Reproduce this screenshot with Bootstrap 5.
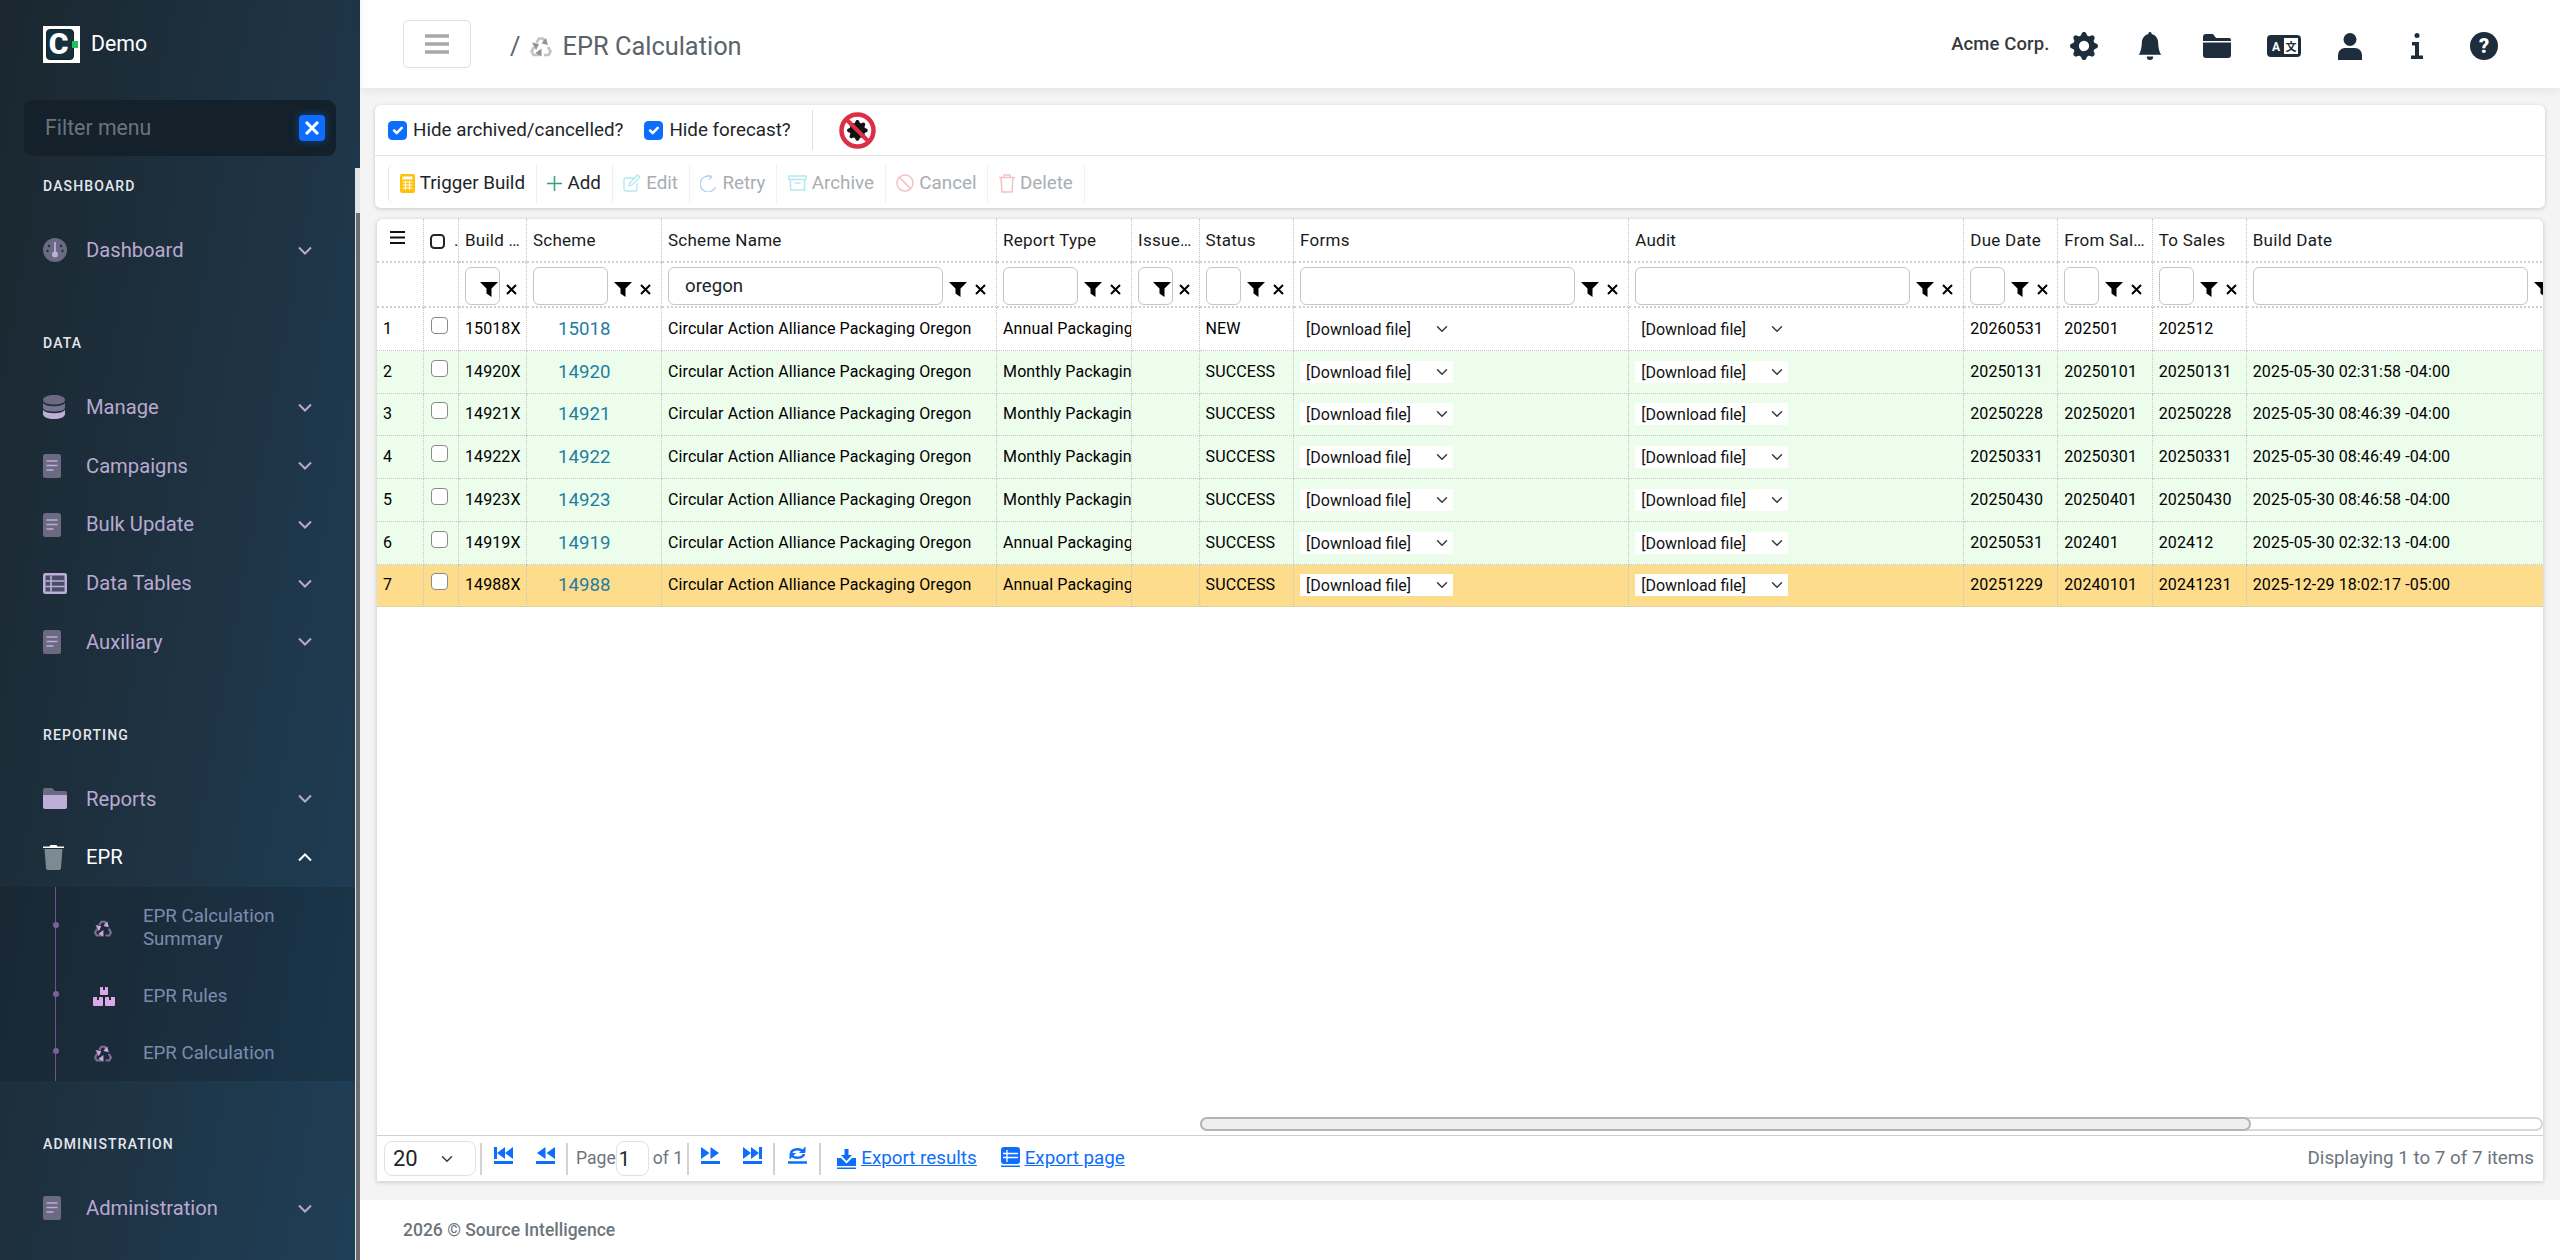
<!DOCTYPE html>
<html lang="en">
<head>
    <meta charset="UTF-8">
    <meta name="viewport" content="width=device-width, initial-scale=1.0">
    <title>EPR Calculation</title>
    <link href="https://cdn.jsdelivr.net/npm/bootstrap@5.3.2/dist/css/bootstrap.min.css" rel="stylesheet">
    <style>
        html, body { height: 100%; }
        body { font-family: Roboto, "Liberation Sans", sans-serif; font-size: 18.67px; background: #fff; overflow: hidden; }
        svg { flex: none; display: block; }
        .main-col { min-width: 0; }
        .recycle-pink { color: #cfa3dd; }
        .crumb-ico { color: #8d949a; }

        /* sidebar */
        .side-panel { width: 360px; height: 1260px; flex: none; position: relative; overflow: hidden; background: linear-gradient(100deg, #1a272f 0%, #1e3140 45%, #1f3f58 100%); }
        .side-brand { height: 88px; padding-left: 43px; color: #fff; font-size: 21.3px; }
        .brand-logo { width: 37px; height: 37px; background: #fff; padding: 3px 6px 3px 3px; margin-right: 11px; flex: none; }
        .brand-logo span { width: 100%; height: 100%; background: #12303f; border: 1px solid #1c1c1c; border-radius: 4px; color: #fff; font-weight: 900; font-size: 30px; line-height: 1; position: relative; padding-right: 3px; }
        .brand-logo span::after { content: ""; position: absolute; right: -5px; top: 11px; width: 6px; height: 7px; background: #22c05c; }
        .side-filter { margin: 12px 24px 0; height: 56px; padding: 0 11px 0 21px; background: #14202a; border-radius: 9px; }
        .side-filter input { background: transparent; border: 0; outline: 0; color: #fff; font-size: 21.3px; width: 100%; padding: 0; }
        .side-filter input::placeholder { color: #69747c; }
        .filter-clear { width: 26px; height: 26px; background: #0d6efd; border-radius: 4px; box-shadow: 0 0 8px rgba(13, 110, 253, .45); border: 0; padding: 0; }
        .side-menu { padding-top: 19px; }
        .side-head { height: 22px; line-height: 22px; padding-left: 43px; color: #e6e8ee; font-size: 14px; font-weight: 500; letter-spacing: 1.15px; margin-bottom: 24px; }
        .side-group { margin-bottom: 52.3px; }
        .side-item { height: 58.67px; padding: 0 48px 0 43px; color: #b9a9d1; text-decoration: none; font-size: 20.2px; }
        .side-item .item-ico { width: 43px; flex: none; }
        .side-item.is-open { color: #fff; }
        .side-sub { background: rgba(10, 22, 30, .2); position: relative; height: 194px; padding-top: 1px; margin-bottom: 2.5px; }
        .side-sub::before { content: ""; position: absolute; left: 55px; top: 0; bottom: 0; width: 1px; background: #6f5590; }
        .sub-item { padding: 17px 30px 17px 93px; line-height: 23px; color: #7c8cad; position: relative; text-decoration: none; }
        .sub-item::before { content: ""; position: absolute; left: 52.5px; top: calc(50% - 5.5px); width: 6px; height: 6px; border-radius: 50%; background: #7e5f9e; }
        .sub-item .item-ico { width: 50px; flex: none; }
        .side-bar-track { position: absolute; right: 0; top: 168px; bottom: 0; width: 5px; background: #e4e4e4; }
        .side-bar-thumb { margin-top: 45px; height: 1047px; margin-left: 1px; background: #6d6d6d; }

        /* header */
        .top-head { height: 88px; flex: none; background: #fff; padding: 0 0 0 43px; position: relative; z-index: 2; box-shadow: 0 3px 8px rgba(60, 60, 80, .07), inset 10px 0 10px -10px rgba(0, 0, 0, .08); }
        .menu-toggle { width: 68px; height: 48px; padding: 0; border: 1px solid #dedede; border-radius: 5px; background: #fff; }
        .crumb { margin: 4px 0 0 39px; color: #5b636a; font-size: 25.4px; }
        .top-icons { padding-right: 43px; margin-top: 4px; color: #1e2d3b; }
        .company { font-size: 18.5px; font-weight: 500; color: #343a40; width: 99px; margin-top: -2px; letter-spacing: .1px; }
        .top-ico { width: 66.7px; }

        /* content */
        .page-body { background: #f4f4f4; padding: 17px 15px 19px 15px; min-height: 0; }
        .tool-card { height: 103px; background: #fff; border-radius: 6px; box-shadow: 0 1px 4px rgba(0, 0, 0, .18); flex: none; }
        .tool-top { height: 51px; border-bottom: 1px solid #e3e3e3; padding-left: 13px; font-size: 18.8px; color: #212529; }
        .tool-top .form-check-input { width: 19px; height: 19px; margin: 0 6px 0 0; flex: none; border-radius: 4px; }
        .tool-label { margin-right: 21px; }
        .tool-sep { width: 1px; height: 40px; background: #dfdfdf; margin: 0 26px 0 21px; }
        .tool-bottom { height: 52px; padding: 7.5px 0 0 13px; }
        .tool-btn { height: 39px; padding: 0 10.7px; border: 0; border-right: 1px solid #efefef; border-radius: 0; font-size: 18.8px; gap: 5px; color: #212529; background: none; }
        .tool-btn:first-child { border-left: 1px solid #e6e6e6; border-radius: 6px 0 0 6px; }
        .tool-btn:disabled { color: #9aa0a6; opacity: .85; border-right-color: #efefef; }
        .grid-card { margin: 11px 2px 0; background: #fff; border-radius: 6px 6px 0 0; box-shadow: 0 1px 5px rgba(0, 0, 0, .2); overflow: hidden; min-height: 0; }
        .grid-wrap { overflow: hidden; min-height: 0; }
        .grid-table { width: 2205px; table-layout: fixed; border-collapse: separate; border-spacing: 0; margin: 0; color: #000; font-size: 16px; --bs-table-bg: transparent; }
        .grid-table > :not(caption) > * > * { padding: 0 0 0 6px; border: 0; border-right: 1px dotted #c4c4c4; border-bottom: 1px dotted #c4c4c4; white-space: nowrap; overflow: hidden; vertical-align: middle; }
        .grid-table thead th { font-weight: 400; height: 44px; padding-top: 2px; font-size: 17px; color: #1a1a1a; letter-spacing: .25px; border-bottom: 2px dotted #cfcfcf; text-overflow: ellipsis; padding-right: 3px; }
        .grid-table thead tr.filter-row td { height: 45px; border-bottom: 2px dotted #cfcfcf; }
        .grid-table tbody td { height: 42.75px; letter-spacing: .1px; }
        .row-done { --bs-table-bg: #ecfdec; }
        .row-pick { --bs-table-bg: #fddc8c; }
        .filter-box { padding-right: 10px; }
        .filter-box .form-control { height: 38px; border: 1.5px solid #c6c6c6; border-radius: 6px; padding: 0 16px; font-size: 18.67px; flex: 1 1 0; min-width: 35px; margin-top: 3px; color: #212529; }
        .filter-box .funnel { margin: 10px 8px 0 6px; }
        .filter-box .cross { margin-top: 10px; }
        .filter-box.is-tight .form-control { flex: 0 0 35px; }
        .filter-box.is-tight .funnel { margin-left: -20px; position: relative; }
        .pick-file { width: 153px; height: 22px; padding: 0 0 0 6px; border: 0; border-radius: 0; font-size: 16px; color: #111; background-position: right 3px center; background-color: #fff; }
        .grid-check { width: 17px; height: 17px; margin: 0 0 0 1px; border-color: #8a8a8a; }
        .head-check { width: 15px; height: 15px; margin: 1px 0 0; border: 2px solid #212529; border-radius: 3px; }
        .head-bars { margin: -7px 0 0 7px; }
        .head-dot { margin-left: 9px; }
        .scheme-link { color: #1f7ea3; font-size: 18.67px; text-decoration: none; margin-left: 25px; letter-spacing: 0; }
        .fake-scroll { height: 14px; margin: 0 0 4px 823px; border: 2px solid #d8d8d8; border-radius: 7px; flex: none; }
        .fake-scroll div { height: 100%; width: 78.2%; margin-top: 0; background: #efefef; outline: 2px solid #b4b4b4; outline-offset: 0; border-radius: 7px; }
        .pager { height: 46px; flex: none; border-top: 1px solid #cfcfcf; padding: 0 9px 0 7px; font-size: 17.6px; color: #6c757d; }
        .pager .form-select { width: 92px; height: 35px; padding: 0 0 0 8px; font-size: 22px; border-radius: 8px; color: #212529; background-position: right 20px center; }
        .pg-sep { width: 2px; height: 32px; background: #d2d2d2; }
        .pg-btn { width: 42px; color: #0d6efd; margin-top: -7px; }
        .pg-btn.is-wide { width: 44px; }
        .pg-page { width: 33px; height: 35px; padding: 0 0 0 2px; font-size: 20px; border-radius: 8px; }
        .pg-export { color: #0d6efd; font-size: 18.8px; gap: 5px; align-items: flex-end; margin-top: -1px; }
        .pg-export span { text-decoration: underline; }
        .pg-export svg { margin-bottom: 3px; }
        .pg-export.is-raised svg { margin-bottom: 5px; }
        .pg-note { font-size: 18.8px; color: #6c757d; }

        .bottom-line { height: 60px; flex: none; padding: 1px 0 0 43px; font-size: 17.5px; font-weight: 500; color: #6c757d; background: #fff; }
    </style>
</head>
<body>
    <!-- shared icons -->
    <svg width="0" height="0" class="position-absolute">
        <symbol id="ico-doc" viewBox="0 0 18 24">
            <rect width="18" height="24" rx="2.5" fill="#6b6a82"/>
            <path d="M3.5 7h11M3.5 11.5h11M3.5 16h7" stroke="#bcaed6" stroke-width="1.6"/>
        </symbol>
        <symbol id="ico-chev" viewBox="0 0 14 9">
            <path d="M1 1.5l6 6 6-6" fill="none" stroke="currentColor" stroke-width="2"/>
        </symbol>
        <symbol id="ico-recycle" viewBox="0 0 24 24">
            <g fill="none" stroke-width="2.6">
                <path d="M7.5 8.5 10 4.5h4l2.2 3.5" stroke="currentColor" stroke-opacity=".55"/>
                <path d="M5 13l-2.5 4.500 2 3.500h6" stroke="currentColor" stroke-opacity=".55"/>
                <path d="M15 21h4.500l2-3.500-2.500-4.500" stroke="currentColor" stroke-opacity=".55"/>
            </g>
            <path d="M16.500 4.500l2 7-6.500-1.500zM2.500 9l7 1.500-3 6zM12 15v8l-6-3.500z" fill="currentColor" transform="translate(.5 -.5)"/>
        </symbol>
        <symbol id="ico-funnel" viewBox="0 0 18 15">
            <path d="M0 0h18l-6.500 6.500V15l-5-3.500V6.500z" fill="#000"/>
        </symbol>
        <symbol id="ico-cross" viewBox="0 0 11 11">
            <path d="M1 1l9 9m0-9l-9 9" stroke="#000" stroke-width="2"/>
        </symbol>
    </svg>

    <div class="d-flex vh-100">
        <aside class="side-panel">
            <div class="side-brand d-flex align-items-center">
                <div class="brand-logo d-flex"><span class="d-flex align-items-center justify-content-center">C</span></div>
                Demo
            </div>
            <div class="side-filter d-flex align-items-center">
                <input type="text" placeholder="Filter menu">
                <button class="filter-clear d-flex align-items-center justify-content-center flex-shrink-0" type="button">
                    <svg width="14" height="14" viewBox="0 0 14 14"><path d="M1 1l12 12m0-12L1 13" stroke="#fff" stroke-width="3"/></svg>
                </button>
            </div>
            <nav class="side-menu">
                <div class="side-group">
                    <div class="side-head">DASHBOARD</div>
                    <a class="side-item d-flex align-items-center" href="#">
                        <span class="item-ico"><svg width="24" height="24" viewBox="0 0 24 24"><circle cx="12" cy="12" r="12" fill="#6b6a82"/><circle cx="12" cy="16.500" r="3" fill="#bcaed6"/><path d="M12 4v12" stroke="#bcaed6" stroke-width="1.800"/><circle cx="6" cy="8" r="1.200" fill="#1e3140"/><circle cx="18" cy="8" r="1.200" fill="#1e3140"/><circle cx="4.500" cy="13" r="1.200" fill="#1e3140"/><circle cx="19.500" cy="13" r="1.200" fill="#1e3140"/></svg></span>
                        <span class="flex-fill">Dashboard</span>
                        <svg width="14" height="9"><use href="#ico-chev"/></svg>
                    </a>
                </div>
                <div class="side-group">
                    <div class="side-head">DATA</div>
                    <a class="side-item d-flex align-items-center" href="#">
                        <span class="item-ico"><svg width="22" height="24" viewBox="0 0 22 24"><path d="M0 5c0-3 5-5 11-5s11 2 11 5-5 4.500-11 4.500S0 8 0 5z" fill="#6b6a82"/><path d="M0 8c2 2.500 6 3.200 11 3.200S20 10.500 22 8v4.500c0 3-5 4-11 4S0 15.500 0 12.500z" fill="#bcaed6" fill-opacity=".55"/><path d="M0 15c2 2.500 6 3.200 11 3.200s9-.7 11-3.200v4c0 3-5 5-11 5S0 22 0 19z" fill="#bcaed6"/></svg></span>
                        <span class="flex-fill">Manage</span>
                        <svg width="14" height="9"><use href="#ico-chev"/></svg>
                    </a>
                    <a class="side-item d-flex align-items-center" href="#">
                        <span class="item-ico"><svg width="18" height="24"><use href="#ico-doc"/></svg></span>
                        <span class="flex-fill">Campaigns</span>
                        <svg width="14" height="9"><use href="#ico-chev"/></svg>
                    </a>
                    <a class="side-item d-flex align-items-center" href="#">
                        <span class="item-ico"><svg width="18" height="24"><use href="#ico-doc"/></svg></span>
                        <span class="flex-fill">Bulk Update</span>
                        <svg width="14" height="9"><use href="#ico-chev"/></svg>
                    </a>
                    <a class="side-item d-flex align-items-center" href="#">
                        <span class="item-ico"><svg width="24" height="21" viewBox="0 0 24 21"><rect width="24" height="21" rx="2.500" fill="#bcaed6"/><rect x="2.500" y="2.500" width="19" height="16" fill="#4b4d68"/><path d="M8 2.500v16M2.500 8h19M2.500 13.500h19" stroke="#bcaed6" stroke-width="1.600"/></svg></span>
                        <span class="flex-fill">Data Tables</span>
                        <svg width="14" height="9"><use href="#ico-chev"/></svg>
                    </a>
                    <a class="side-item d-flex align-items-center" href="#">
                        <span class="item-ico"><svg width="18" height="24"><use href="#ico-doc"/></svg></span>
                        <span class="flex-fill">Auxiliary</span>
                        <svg width="14" height="9"><use href="#ico-chev"/></svg>
                    </a>
                </div>
                <div class="side-group">
                    <div class="side-head">REPORTING</div>
                    <a class="side-item d-flex align-items-center" href="#">
                        <span class="item-ico"><svg width="24" height="21" viewBox="0 0 24 21"><path d="M0 2a2 2 0 0 1 2-2h7l3 3h10a2 2 0 0 1 2 2v3H0z" fill="#6b6a82"/><path d="M0 7h24v12a2 2 0 0 1-2 2H2a2 2 0 0 1-2-2z" fill="#bcaed6"/></svg></span>
                        <span class="flex-fill">Reports</span>
                        <svg width="14" height="9"><use href="#ico-chev"/></svg>
                    </a>
                    <a class="side-item is-open d-flex align-items-center" href="#">
                        <span class="item-ico"><svg width="21" height="25" viewBox="0 0 21 25"><path d="M6.500 1.500l1-1.500h6l1 1.500H21V3H0V1.500z" fill="#fff"/><path d="M1.500 4h18L18 23a2 2 0 0 1-2 2H5a2 2 0 0 1-2-2z" fill="#7d8a8f"/></svg></span>
                        <span class="flex-fill">EPR</span>
                        <svg width="14" height="9" viewBox="0 0 14 9"><path d="M1 7.500l6-6 6 6" fill="none" stroke="#fff" stroke-width="2"/></svg>
                    </a>
                    <div class="side-sub">
                        <a class="sub-item d-flex align-items-center" href="#">
                            <span class="item-ico"><svg width="20" height="20" class="recycle-pink"><use href="#ico-recycle"/></svg></span>
                            <span>EPR Calculation Summary</span>
                        </a>
                        <a class="sub-item d-flex align-items-center" href="#">
                            <span class="item-ico"><svg width="22" height="19" viewBox="0 0 22 19"><path d="M7 1a1 1 0 0 1 1-1h6a1 1 0 0 1 1 1v6a1 1 0 0 1-1 1H8a1 1 0 0 1-1-1zM0 11a1 1 0 0 1 1-1h8a1 1 0 0 1 1 1v7a1 1 0 0 1-1 1H1a1 1 0 0 1-1-1zM12 11a1 1 0 0 1 1-1h8a1 1 0 0 1 1 1v7a1 1 0 0 1-1 1h-8a1 1 0 0 1-1-1z" fill="#dba9e8"/><path d="M10 0h2v3h-2zM4 10h2v3H4zM16 10h2v3h-2z" fill="#1c3040"/></svg></span>
                            <span>EPR Rules</span>
                        </a>
                        <a class="sub-item d-flex align-items-center" href="#">
                            <span class="item-ico"><svg width="20" height="20" class="recycle-pink"><use href="#ico-recycle"/></svg></span>
                            <span>EPR Calculation</span>
                        </a>
                    </div>
                </div>
                <div class="side-group">
                    <div class="side-head">ADMINISTRATION</div>
                    <a class="side-item d-flex align-items-center" href="#">
                        <span class="item-ico"><svg width="18" height="24"><use href="#ico-doc"/></svg></span>
                        <span class="flex-fill">Administration</span>
                        <svg width="14" height="9"><use href="#ico-chev"/></svg>
                    </a>
                </div>
            </nav>
            <div class="side-bar-track"><div class="side-bar-thumb"></div></div>
        </aside>

        <div class="flex-fill d-flex flex-column main-col">
            <header class="top-head d-flex align-items-center">
                <button class="menu-toggle d-flex align-items-center justify-content-center" type="button">
                    <svg width="24" height="22" viewBox="0 0 24 22"><path d="M0 3h24M0 11h24M0 19h24" stroke="#a8a8a8" stroke-width="3.500"/></svg>
                </button>
                <div class="crumb d-flex align-items-center gap-2">
                    <span>/</span>
                    <svg width="26" height="24" class="crumb-ico"><use href="#ico-recycle"/></svg>
                    <span>EPR Calculation</span>
                </div>
                <div class="top-icons d-flex align-items-center ms-auto">
                    <span class="company">Acme Corp.</span>
                    <span class="top-ico d-flex justify-content-center"><svg width="28" height="28" viewBox="0 0 16 16" fill="currentColor"><path d="M9.405 1.05c-.413-1.4-2.397-1.4-2.81 0l-.1.34a1.464 1.464 0 0 1-2.105.872l-.31-.17c-1.283-.698-2.686.705-1.987 1.987l.169.311c.446.82.023 1.841-.872 2.105l-.34.1c-1.4.413-1.4 2.397 0 2.81l.34.1a1.464 1.464 0 0 1 .872 2.105l-.17.31c-.698 1.283.705 2.686 1.987 1.987l.311-.169a1.464 1.464 0 0 1 2.105.872l.1.34c.413 1.4 2.397 1.4 2.81 0l.1-.34a1.464 1.464 0 0 1 2.105-.872l.31.17c1.283.698 2.686-.705 1.987-1.987l-.169-.311a1.464 1.464 0 0 1 .872-2.105l.34-.1c1.4-.413 1.4-2.397 0-2.81l-.34-.1a1.464 1.464 0 0 1-.872-2.105l.17-.31c.698-1.283-.705-2.686-1.987-1.987l-.311.169a1.464 1.464 0 0 1-2.105-.872l-.1-.34zM8 10.93a2.929 2.929 0 1 1 0-5.86 2.929 2.929 0 0 1 0 5.858z"/></svg></span>
                    <span class="top-ico d-flex justify-content-center"><svg width="26" height="28" viewBox="0 0 16 16" preserveAspectRatio="none" fill="currentColor"><path d="M8 16a2 2 0 0 0 2-2H6a2 2 0 0 0 2 2zm.995-14.901a1 1 0 1 0-1.99 0A5.002 5.002 0 0 0 3 6c0 1.098-.5 6-2 7h14c-1.5-1-2-5.902-2-7 0-2.42-1.72-4.44-4.005-4.901z"/></svg></span>
                    <span class="top-ico d-flex justify-content-center"><svg width="28" height="24" viewBox="0 0 28 24" fill="currentColor"><path d="M0 3a3 3 0 0 1 3-3h7l3 4h13a2 2 0 0 1 2 2v1H0z"/><path d="M0 8.500h28V21a3 3 0 0 1-3 3H3a3 3 0 0 1-3-3z"/></svg></span>
                    <span class="top-ico d-flex justify-content-center"><svg width="34" height="22" viewBox="0 0 34 22"><rect width="34" height="22" rx="4" fill="currentColor"/><rect x="17" y="3" width="14" height="16" fill="#fff"/><text x="9" y="16" text-anchor="middle" font-family="Roboto" font-weight="700" font-size="12" fill="#fff">A</text><text x="24" y="15.500" text-anchor="middle" font-family="Noto Sans CJK SC" font-weight="700" font-size="11" fill="#1e2d3b">文</text></svg></span>
                    <span class="top-ico d-flex justify-content-center"><svg width="24" height="27" viewBox="0 0 24 27" fill="currentColor" class="user-ico"><circle cx="12" cy="6.500" r="6.500"/><path d="M0 27v-5a7 7 0 0 1 7-7h10a7 7 0 0 1 7 7v5z"/></svg></span>
                    <span class="top-ico d-flex justify-content-center"><svg width="12" height="26" viewBox="0 0 12 26" fill="currentColor"><circle cx="6" cy="2.500" r="2.500"/><path d="M1 9h7v13.500h4V26H0v-3.500h4V12.500H1z"/></svg></span>
                    <span class="top-ico d-flex justify-content-center"><svg width="28" height="28" viewBox="0 0 28 28"><circle cx="14" cy="14" r="14" fill="currentColor"/><text x="14" y="21" text-anchor="middle" font-family="Roboto" font-weight="900" font-size="20" fill="#fff">?</text></svg></span>
                </div>
            </header>

            <main class="page-body flex-fill d-flex flex-column">
                <section class="tool-card">
                    <div class="tool-top d-flex align-items-center">
                        <input class="form-check-input" type="checkbox" checked>
                        <span class="tool-label">Hide archived/cancelled?</span>
                        <input class="form-check-input" type="checkbox" checked>
                        <span>Hide forecast?</span>
                        <span class="tool-sep"></span>
                        <svg width="37" height="37" viewBox="0 0 37 37">
                            <path fill="#111" transform="translate(8 8) scale(1.300)" d="M9.405 1.05c-.413-1.4-2.397-1.4-2.81 0l-.1.34a1.464 1.464 0 0 1-2.105.872l-.31-.17c-1.283-.698-2.686.705-1.987 1.987l.169.311c.446.82.023 1.841-.872 2.105l-.34.1c-1.4.413-1.4 2.397 0 2.81l.34.1a1.464 1.464 0 0 1 .872 2.105l-.17.31c-.698 1.283.705 2.686 1.987 1.987l.311-.169a1.464 1.464 0 0 1 2.105.872l.1.34c.413 1.4 2.397 1.4 2.81 0l.1-.34a1.464 1.464 0 0 1 2.105-.872l.31.17c1.283.698 2.686-.705 1.987-1.987l-.169-.311a1.464 1.464 0 0 1 .872-2.105l.34-.1c1.4-.413 1.4-2.397 0-2.81l-.34-.1a1.464 1.464 0 0 1-.872-2.105l.17-.31c.698-1.283-.705-2.686-1.987-1.987l-.311.169a1.464 1.464 0 0 1-2.105-.872l-.1-.34z"/>
                            <circle cx="18.500" cy="18.500" r="16" fill="none" stroke="#dc2f45" stroke-width="4.500"/>
                            <path d="M7 7l23 23" stroke="#dc2f45" stroke-width="4"/>
                        </svg>
                    </div>
                    <div class="tool-bottom d-flex">
                        <div class="d-flex">
                            <button class="btn tool-btn d-flex align-items-center" type="button">
                                <svg width="15" height="19" viewBox="0 0 15 19"><rect width="15" height="19" rx="2" fill="#ffc107"/><rect x="2.500" y="2.500" width="10" height="3" fill="#fff"/><path d="M2.500 8h10M2.500 11h10M2.500 14h10M5.500 7v9M9.500 7v9" stroke="#fff" stroke-width="1"/></svg>
                                Trigger Build
                            </button>
                            <button class="btn tool-btn d-flex align-items-center" type="button">
                                <svg width="15" height="15" viewBox="0 0 15 15"><path d="M7.500 0v15M0 7.500h15" stroke="#2f9f7f" stroke-width="1.500"/></svg>
                                Add
                            </button>
                            <button class="btn tool-btn d-flex align-items-center" type="button" disabled>
                                <svg width="18" height="18" viewBox="0 0 18 18" fill="none" stroke="#a6e6f2" stroke-width="1.400"><path d="M13 4H3a2 2 0 0 0-2 2v9a2 2 0 0 0 2 2h9a2 2 0 0 0 2-2V9"/><path d="M6 12l.7-3L14.500 1l2.300 2.300L9 11z"/></svg>
                                Edit
                            </button>
                            <button class="btn tool-btn d-flex align-items-center" type="button" disabled>
                                <svg width="17" height="17" viewBox="0 0 17 17" fill="none" stroke="#a8c8f8" stroke-width="1.500"><path d="M15.500 12A8 8 0 1 1 11 1.500"/><path d="M8.500 0l3 1.700-2 3"/></svg>
                                Retry
                            </button>
                            <button class="btn tool-btn d-flex align-items-center" type="button" disabled>
                                <svg width="19" height="16" viewBox="0 0 19 16" fill="none" stroke="#a6e6f2" stroke-width="1.500"><path d="M1 1h17v3.500H1zM2.500 4.500V15h14V4.500M6.500 8h6"/></svg>
                                Archive
                            </button>
                            <button class="btn tool-btn d-flex align-items-center" type="button" disabled>
                                <svg width="18" height="18" viewBox="0 0 18 18" fill="none" stroke="#f5b5bb" stroke-width="1.500"><circle cx="9" cy="9" r="8"/><path d="M3.400 3.400l11.200 11.200"/></svg>
                                Cancel
                            </button>
                            <button class="btn tool-btn d-flex align-items-center" type="button" disabled>
                                <svg width="16" height="19" viewBox="0 0 16 19" fill="none" stroke="#f5b5bb" stroke-width="1.500"><path d="M0 3.500h16M5 3.500V1h6v2.500M2 3.500l1 14.500h10l1-14.500"/></svg>
                                Delete
                            </button>
                        </div>
                    </div>
                </section>

                <section class="grid-card flex-fill d-flex flex-column">
                    <div class="grid-wrap flex-fill">
                        <table class="table grid-table">
                            <colgroup id="gridCols"></colgroup>
                            <thead>
                                <tr id="gridHead"></tr>
                                <tr class="filter-row" id="gridFilters"></tr>
                            </thead>
                            <tbody id="gridBody"></tbody>
                        </table>
                    </div>
                    <div class="fake-scroll"><div></div></div>
                    <div class="pager d-flex align-items-center">
                        <select class="form-select flex-shrink-0"><option>20</option></select>
                        <span class="pg-sep ms-1"></span>
                        <a class="pg-btn d-flex justify-content-center" href="#">
                            <svg width="19" height="17" viewBox="0 0 19 17" fill="currentColor"><path d="M0 0h3v12H0zM11 0v12L3 6zM19 0v12l-8-6zM0 14h19v3H0z"/></svg>
                        </a>
                        <a class="pg-btn d-flex justify-content-center" href="#">
                            <svg width="19" height="17" viewBox="0 0 19 17" fill="currentColor"><path d="M9.500 0v12L1 6zM19 0v12l-8.500-6zM0 14h19v3H0z"/></svg>
                        </a>
                        <span class="pg-sep"></span>
                        <span class="ms-1 ps-1">Page</span>
                        <input class="form-control pg-page" type="text" value="1">
                        <span class="ms-1">of 1</span>
                        <span class="pg-sep ms-1"></span>
                        <a class="pg-btn d-flex justify-content-center" href="#">
                            <svg width="19" height="17" viewBox="0 0 19 17" fill="currentColor"><path d="M0 0l8.500 6L0 12zM9.500 0L18 6l-8.500 6zM0 14h19v3H0z"/></svg>
                        </a>
                        <a class="pg-btn d-flex justify-content-center" href="#">
                            <svg width="19" height="17" viewBox="0 0 19 17" fill="currentColor"><path d="M0 0l8 6-8 6zM8 0l8 6-8 6zM16 0h3v12h-3zM0 14h19v3H0z"/></svg>
                        </a>
                        <span class="pg-sep"></span>
                        <a class="pg-btn is-wide d-flex justify-content-center" href="#">
                            <svg width="19" height="17" viewBox="0 0 19 17" fill="none" stroke="currentColor" stroke-width="2.500"><path d="M3 6c1-4 8-5 12-2M16 7c-1 4-8 5-12 2"/><path d="M17 0v5.500h-5.500M2 12V6.500h5.500" fill="currentColor" stroke-width="1"/><path d="M0 15.500h19"/></svg>
                        </a>
                        <span class="pg-sep"></span>
                        <a class="pg-export d-flex ms-3" href="#">
                            <svg width="19" height="20" viewBox="0 0 19 20" fill="currentColor"><path d="M7.500 0h4v6h3.500l-5.500 6L4 6h3.500zM0 9h4l5.500 5.500L15 9h4v8H0zM0 18.500h19V20H0z"/></svg>
                            <span>Export results</span>
                        </a>
                        <a class="pg-export is-raised d-flex ms-4" href="#">
                            <svg width="19" height="20" viewBox="0 0 19 20" fill="currentColor"><rect width="19" height="17" rx="3"/><path d="M6 3v12M2 6.500h15M2 10.500h15" stroke="#fff" stroke-width="1.300"/><path d="M0 18.500h19V20H0z"/></svg>
                            <span>Export page</span>
                        </a>
                        <span class="pg-note ms-auto">Displaying 1 to 7 of 7 items</span>
                    </div>
                </section>
            </main>

            <footer class="bottom-line d-flex align-items-center">2026 © Source Intelligence</footer>
        </div>
    </div>

    <script src="https://cdn.jsdelivr.net/npm/bootstrap@5.3.2/dist/js/bootstrap.bundle.min.js"></script>
    <script>
        const columns = [
            { w: 47, title: '' }, { w: 35, title: '' }, { w: 68, title: 'Build Number', tight: true },
            { w: 135, title: 'Scheme' }, { w: 335, title: 'Scheme Name', value: 'oregon' },
            { w: 135, title: 'Report Type' }, { w: 67.5, title: 'IssueCount', tight: true },
            { w: 94.5, title: 'Status' }, { w: 335, title: 'Forms' }, { w: 335, title: 'Audit' },
            { w: 94, title: 'Due Date' }, { w: 94.5, title: 'From Sales Date' }, { w: 94, title: 'To Sales' },
            { w: 335, title: 'Build Date' }
        ];

        const name = 'Circular Action Alliance Packaging Oregon';
        const rows = [
            ['15018', 'Annual Packaging', 'NEW', '20260531', '202501', '202512', ''],
            ['14920', 'Monthly Packaging', 'SUCCESS', '20250131', '20250101', '20250131', '2025-05-30 02:31:58 -04:00'],
            ['14921', 'Monthly Packaging', 'SUCCESS', '20250228', '20250201', '20250228', '2025-05-30 08:46:39 -04:00'],
            ['14922', 'Monthly Packaging', 'SUCCESS', '20250331', '20250301', '20250331', '2025-05-30 08:46:49 -04:00'],
            ['14923', 'Monthly Packaging', 'SUCCESS', '20250430', '20250401', '20250430', '2025-05-30 08:46:58 -04:00'],
            ['14919', 'Annual Packaging', 'SUCCESS', '20250531', '202401', '202412', '2025-05-30 02:32:13 -04:00'],
            ['14988', 'Annual Packaging', 'SUCCESS', '20251229', '20240101', '20241231', '2025-12-29 18:02:17 -05:00']
        ];

        // Column widths, titles and filters
        document.getElementById('gridCols').innerHTML = columns.map(c => `<col style="width:${c.w}px">`).join('');
        document.getElementById('gridHead').innerHTML = columns.map((c, i) => {
            if (i === 0) return '<th><svg class="head-bars" width="15" height="13" viewBox="0 0 15 13"><path d="M0 1h15M0 6.500h15M0 12h15" stroke="#111" stroke-width="2"/></svg></th>';
            if (i === 1) return '<th><div class="d-flex align-items-center"><input class="form-check-input head-check flex-shrink-0" type="checkbox"><span class="head-dot">.</span></div></th>';
            return `<th>${c.title}</th>`;
        }).join('');
        document.getElementById('gridFilters').innerHTML = columns.map((c, i) => {
            if (i < 2) return '<td></td>';
            return `<td><div class="filter-box d-flex align-items-center ${c.tight ? 'is-tight' : ''}">
                <input class="form-control" type="text" value="${c.value || ''}">
                <svg class="funnel" width="18" height="15"><use href="#ico-funnel"/></svg>
                <svg class="cross" width="11" height="11"><use href="#ico-cross"/></svg>
            </div></td>`;
        }).join('');

        // Grid rows
        const pick = '<select class="form-select pick-file"><option>[Download file]</option></select>';
        document.getElementById('gridBody').innerHTML = rows.map((r, i) => {
            const tone = i === 0 ? '' : (i === 6 ? 'row-pick' : 'row-done');
            return `<tr class="${tone}">
                <td>${i + 1}</td>
                <td><input class="form-check-input grid-check" type="checkbox"></td>
                <td>${r[0]}X</td>
                <td><a class="scheme-link" href="#">${r[0]}</a></td>
                <td>${name}</td>
                <td>${r[1]}</td>
                <td></td>
                <td>${r[2]}</td>
                <td>${pick}</td>
                <td>${pick}</td>
                <td>${r[3]}</td>
                <td>${r[4]}</td>
                <td>${r[5]}</td>
                <td>${r[6]}</td>
            </tr>`;
        }).join('');
    </script>
</body>
</html>
